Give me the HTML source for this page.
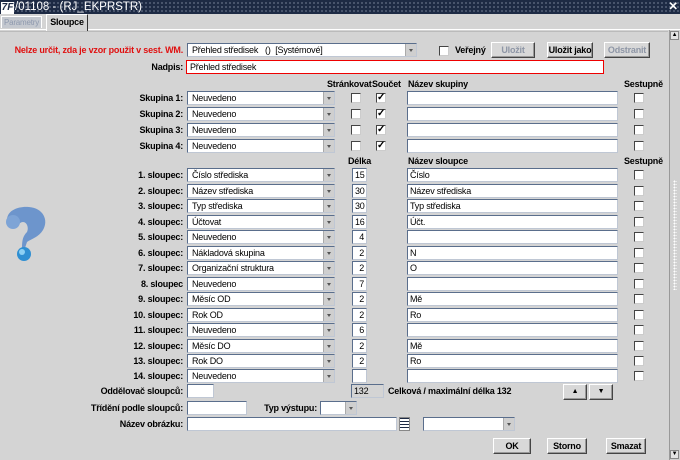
<!DOCTYPE html>
<html><head><meta charset="utf-8"><style>
*{box-sizing:border-box;margin:0;padding:0}
body{width:680px;height:460px;background:#d4d4d4;font-family:"Liberation Sans",sans-serif;font-size:9px;letter-spacing:-0.2px;position:relative;overflow:hidden;color:#000}
.a{position:absolute}
.tb{left:0;top:0;width:680px;height:14px;background:#1d2a44;color:#fff;font-size:11.5px;letter-spacing:0;line-height:14px;background-image:radial-gradient(#56627a 0.8px,transparent 1px);background-size:4px 4px;background-position:0 1px}
.lbl{position:absolute;font-weight:bold;text-align:right;white-space:nowrap}
.cb{position:absolute;height:14px;background:#fff;border:1px solid #5a6e8c;border-right-color:#bfc7d4;border-bottom-color:#bfc7d4;padding-left:4px;line-height:12px;white-space:nowrap;overflow:hidden}
.cb i{position:absolute;right:0;top:0;width:11px;height:12px;background:#cfcfcf;border-left:1px solid #aaa}
.cb i:after{content:"";position:absolute;left:3px;top:5px;border:2.5px solid transparent;border-top:3px solid #555}
.in{position:absolute;height:14px;background:#fff;border:1px solid #5a6e8c;border-right-color:#bfc7d4;border-bottom-color:#bfc7d4;padding-left:2px;line-height:12px;white-space:nowrap;overflow:hidden}
.num{text-align:right;padding-right:2px}
.ck{position:absolute;width:10px;height:10px;background:#fff;border:1px solid #444;border-right-color:#ccc;border-bottom-color:#ccc;font-size:10px;line-height:8px;text-align:center;font-weight:bold}
.bt{position:absolute;height:16px;background:#d8d8d8;border:1px solid #fff;border-right-color:#444;border-bottom-color:#444;text-align:center;line-height:14px;font-weight:bold;box-shadow:inset -1px -1px #999;white-space:nowrap}
.dis{color:#8e96a6}
.h{position:absolute;font-weight:bold;white-space:nowrap}
</style></head><body>
<div class="a tb"><span style="display:inline-block;width:13px;height:12px;background:#fff;color:#1d2a44;font-size:10px;line-height:12px;margin:1px 1px 0 1px;text-align:center;font-style:italic;font-weight:bold">7F</span>/01108 - (RJ_EKPRSTR)<span style="position:absolute;right:2px;font-weight:bold">✕</span></div>
<div class="a" style="left:0;top:14px;width:680px;height:16px;background:#d4d4d4;border-bottom:1px solid #fff"></div>
<div class="a" style="left:1px;top:16px;width:41px;height:12px;background:#c4c8cf;color:#8e99ae;border:1px solid #fff;border-bottom:none;text-align:center;line-height:11px;font-size:8px">Parametry</div>
<div class="a" style="left:46px;top:14px;width:42px;height:17px;background:#d4d4d4;border:1px solid #fff;border-right-color:#333;border-bottom:none;text-align:center;line-height:15px;font-weight:bold;z-index:2">Sloupce</div>
<div class="a" style="left:0;top:31px;width:668px;height:429px;border-top:1px solid #bbb"></div>
<div class="a" style="left:669px;top:30px;width:11px;height:430px;background:#d0d0d0;border-left:1px solid #999"></div>
<div class="a" style="left:670px;top:31px;width:9px;height:9px;border:1px solid #888;background:#e4e4e4;font-size:6px;line-height:7px;text-align:center">▲</div>
<div class="a" style="left:670px;top:450px;width:9px;height:9px;border:1px solid #888;background:#e4e4e4;font-size:6px;line-height:7px;text-align:center">▼</div>
<div class="a" style="left:673px;top:180px;width:4px;height:110px;background-image:radial-gradient(#fff 0.8px,transparent 1px);background-size:3px 3px"></div>

<div class="lbl" style="right:497px;top:45px;color:#e01010">Nelze určit, zda je vzor použit v sest. WM.</div>
<div class="cb" style="left:187px;top:43px;width:230px">Přehled středisek &nbsp; () &nbsp;[Systémové]<i></i></div>
<div class="ck" style="left:439px;top:46px"></div>
<div class="h" style="left:455px;top:45px">Veřejný</div>
<div class="bt dis" style="left:491px;top:42px;width:44px">Uložit</div>
<div class="bt" style="left:547px;top:42px;width:46px">Uložit jako</div>
<div class="bt dis" style="left:604px;top:42px;width:46px">Odstranit</div>
<div class="lbl" style="right:497px;top:62px">Nadpis:</div>
<div class="in" style="left:186px;top:60px;width:418px;border:1px solid #e00;padding-left:3px">Přehled středisek</div>

<div class="h" style="left:327px;top:79px">Stránkovat</div>
<div class="h" style="left:372px;top:79px">Součet</div>
<div class="h" style="left:408px;top:79px">Název skupiny</div>
<div class="h" style="left:624px;top:79px">Sestupně</div>

<div class="lbl" style="right:497px;top:93px">Skupina 1:</div><div class="cb" style="left:187px;top:91px;width:148px">Neuvedeno<i></i></div><div class="ck" style="left:351px;top:93px"></div><div class="ck" style="left:376px;top:93px">✓</div><div class="in" style="left:407px;top:91px;width:211px"></div><div class="ck" style="left:634px;top:93px"></div>
<div class="lbl" style="right:497px;top:109px">Skupina 2:</div><div class="cb" style="left:187px;top:107px;width:148px">Neuvedeno<i></i></div><div class="ck" style="left:351px;top:109px"></div><div class="ck" style="left:376px;top:109px">✓</div><div class="in" style="left:407px;top:107px;width:211px"></div><div class="ck" style="left:634px;top:109px"></div>
<div class="lbl" style="right:497px;top:125px">Skupina 3:</div><div class="cb" style="left:187px;top:123px;width:148px">Neuvedeno<i></i></div><div class="ck" style="left:351px;top:125px"></div><div class="ck" style="left:376px;top:125px">✓</div><div class="in" style="left:407px;top:123px;width:211px"></div><div class="ck" style="left:634px;top:125px"></div>
<div class="lbl" style="right:497px;top:141px">Skupina 4:</div><div class="cb" style="left:187px;top:139px;width:148px">Neuvedeno<i></i></div><div class="ck" style="left:351px;top:141px"></div><div class="ck" style="left:376px;top:141px">✓</div><div class="in" style="left:407px;top:139px;width:211px"></div><div class="ck" style="left:634px;top:141px"></div>

<div class="h" style="left:348px;top:156px">Délka</div>
<div class="h" style="left:408px;top:156px">Název sloupce</div>
<div class="h" style="left:624px;top:156px">Sestupně</div>

<div class="lbl" style="right:497px;top:170px">1. sloupec:</div><div class="cb" style="left:187px;top:168px;width:148px">Číslo střediska<i></i></div><div class="in num" style="left:352px;top:168px;width:15px">15</div><div class="in" style="left:407px;top:168px;width:211px">Číslo</div><div class="ck" style="left:634px;top:170px"></div>
<div class="lbl" style="right:497px;top:186px">2. sloupec:</div><div class="cb" style="left:187px;top:184px;width:148px">Název střediska<i></i></div><div class="in num" style="left:352px;top:184px;width:15px">30</div><div class="in" style="left:407px;top:184px;width:211px">Název střediska</div><div class="ck" style="left:634px;top:186px"></div>
<div class="lbl" style="right:497px;top:201px">3. sloupec:</div><div class="cb" style="left:187px;top:199px;width:148px">Typ střediska<i></i></div><div class="in num" style="left:352px;top:199px;width:15px">30</div><div class="in" style="left:407px;top:199px;width:211px">Typ střediska</div><div class="ck" style="left:634px;top:201px"></div>
<div class="lbl" style="right:497px;top:217px">4. sloupec:</div><div class="cb" style="left:187px;top:215px;width:148px">Účtovat<i></i></div><div class="in num" style="left:352px;top:215px;width:15px">16</div><div class="in" style="left:407px;top:215px;width:211px">Účt.</div><div class="ck" style="left:634px;top:217px"></div>
<div class="lbl" style="right:497px;top:232px">5. sloupec:</div><div class="cb" style="left:187px;top:230px;width:148px">Neuvedeno<i></i></div><div class="in num" style="left:352px;top:230px;width:15px">4</div><div class="in" style="left:407px;top:230px;width:211px"></div><div class="ck" style="left:634px;top:232px"></div>
<div class="lbl" style="right:497px;top:248px">6. sloupec:</div><div class="cb" style="left:187px;top:246px;width:148px">Nákladová skupina<i></i></div><div class="in num" style="left:352px;top:246px;width:15px">2</div><div class="in" style="left:407px;top:246px;width:211px">N</div><div class="ck" style="left:634px;top:248px"></div>
<div class="lbl" style="right:497px;top:263px">7. sloupec:</div><div class="cb" style="left:187px;top:261px;width:148px">Organizační struktura<i></i></div><div class="in num" style="left:352px;top:261px;width:15px">2</div><div class="in" style="left:407px;top:261px;width:211px">O</div><div class="ck" style="left:634px;top:263px"></div>
<div class="lbl" style="right:497px;top:279px">8. sloupec</div><div class="cb" style="left:187px;top:277px;width:148px">Neuvedeno<i></i></div><div class="in num" style="left:352px;top:277px;width:15px">7</div><div class="in" style="left:407px;top:277px;width:211px"></div><div class="ck" style="left:634px;top:279px"></div>
<div class="lbl" style="right:497px;top:294px">9. sloupec:</div><div class="cb" style="left:187px;top:292px;width:148px">Měsíc OD<i></i></div><div class="in num" style="left:352px;top:292px;width:15px">2</div><div class="in" style="left:407px;top:292px;width:211px">Mě</div><div class="ck" style="left:634px;top:294px"></div>
<div class="lbl" style="right:497px;top:310px">10. sloupec:</div><div class="cb" style="left:187px;top:308px;width:148px">Rok OD<i></i></div><div class="in num" style="left:352px;top:308px;width:15px">2</div><div class="in" style="left:407px;top:308px;width:211px">Ro</div><div class="ck" style="left:634px;top:310px"></div>
<div class="lbl" style="right:497px;top:325px">11. sloupec:</div><div class="cb" style="left:187px;top:323px;width:148px">Neuvedeno<i></i></div><div class="in num" style="left:352px;top:323px;width:15px">6</div><div class="in" style="left:407px;top:323px;width:211px"></div><div class="ck" style="left:634px;top:325px"></div>
<div class="lbl" style="right:497px;top:341px">12. sloupec:</div><div class="cb" style="left:187px;top:339px;width:148px">Měsíc DO<i></i></div><div class="in num" style="left:352px;top:339px;width:15px">2</div><div class="in" style="left:407px;top:339px;width:211px">Mě</div><div class="ck" style="left:634px;top:341px"></div>
<div class="lbl" style="right:497px;top:356px">13. sloupec:</div><div class="cb" style="left:187px;top:354px;width:148px">Rok DO<i></i></div><div class="in num" style="left:352px;top:354px;width:15px">2</div><div class="in" style="left:407px;top:354px;width:211px">Ro</div><div class="ck" style="left:634px;top:356px"></div>
<div class="lbl" style="right:497px;top:371px">14. sloupec:</div><div class="cb" style="left:187px;top:369px;width:148px">Neuvedeno<i></i></div><div class="in num" style="left:352px;top:369px;width:15px"></div><div class="in" style="left:407px;top:369px;width:211px"></div><div class="ck" style="left:634px;top:371px"></div>

<div class="lbl" style="right:497px;top:386px">Oddělovač sloupců:</div><div class="in" style="left:187px;top:384px;width:27px"></div>
<div class="in" style="left:351px;top:384px;width:33px;background:#d4d4d4">132</div>
<div class="h" style="left:388px;top:386px">Celková / maximální délka 132</div>
<div class="bt" style="left:563px;top:384px;width:24px;font-size:7px">▲</div>
<div class="bt" style="left:589px;top:384px;width:24px;font-size:7px">▼</div>
<div class="lbl" style="right:497px;top:403px">Třídění podle sloupců:</div><div class="in" style="left:187px;top:401px;width:60px"></div>
<div class="lbl" style="right:363px;top:403px">Typ výstupu:</div><div class="cb" style="left:320px;top:401px;width:37px"><i></i></div>
<div class="lbl" style="right:497px;top:419px">Název obrázku:</div><div class="in" style="left:187px;top:417px;width:210px"></div>
<div class="a" style="left:399px;top:417px;width:11px;height:14px;background:repeating-linear-gradient(#1d2a44 0 1px,#fff 1px 3px);border:1px solid #888"></div>
<div class="cb" style="left:423px;top:417px;width:92px"><i></i></div>
<div class="bt" style="left:493px;top:438px;width:38px">OK</div>
<div class="bt" style="left:547px;top:438px;width:40px">Storno</div>
<div class="bt" style="left:606px;top:438px;width:40px">Smazat</div>

<svg class="a" style="left:3px;top:206px" width="46" height="56" viewBox="0 0 46 56">
<path d="M4 14 C4 4 16 0 26 1 C40 2 46 14 40 24 C36 31 28 33 24 36 L22 42 L19 42 C19 34 20 30 24 26 C26 22 24 16 20 16 C16 16 14 22 8 22 C5 22 4 18 4 14 Z" fill="#6d95cc"/>
<circle cx="10" cy="16" r="7" fill="#7ea4d6"/>
<circle cx="21" cy="48" r="7" fill="#2f8fd2"/>
<circle cx="19" cy="46" r="3" fill="#8cd0f4"/>
</svg>
</body></html>
